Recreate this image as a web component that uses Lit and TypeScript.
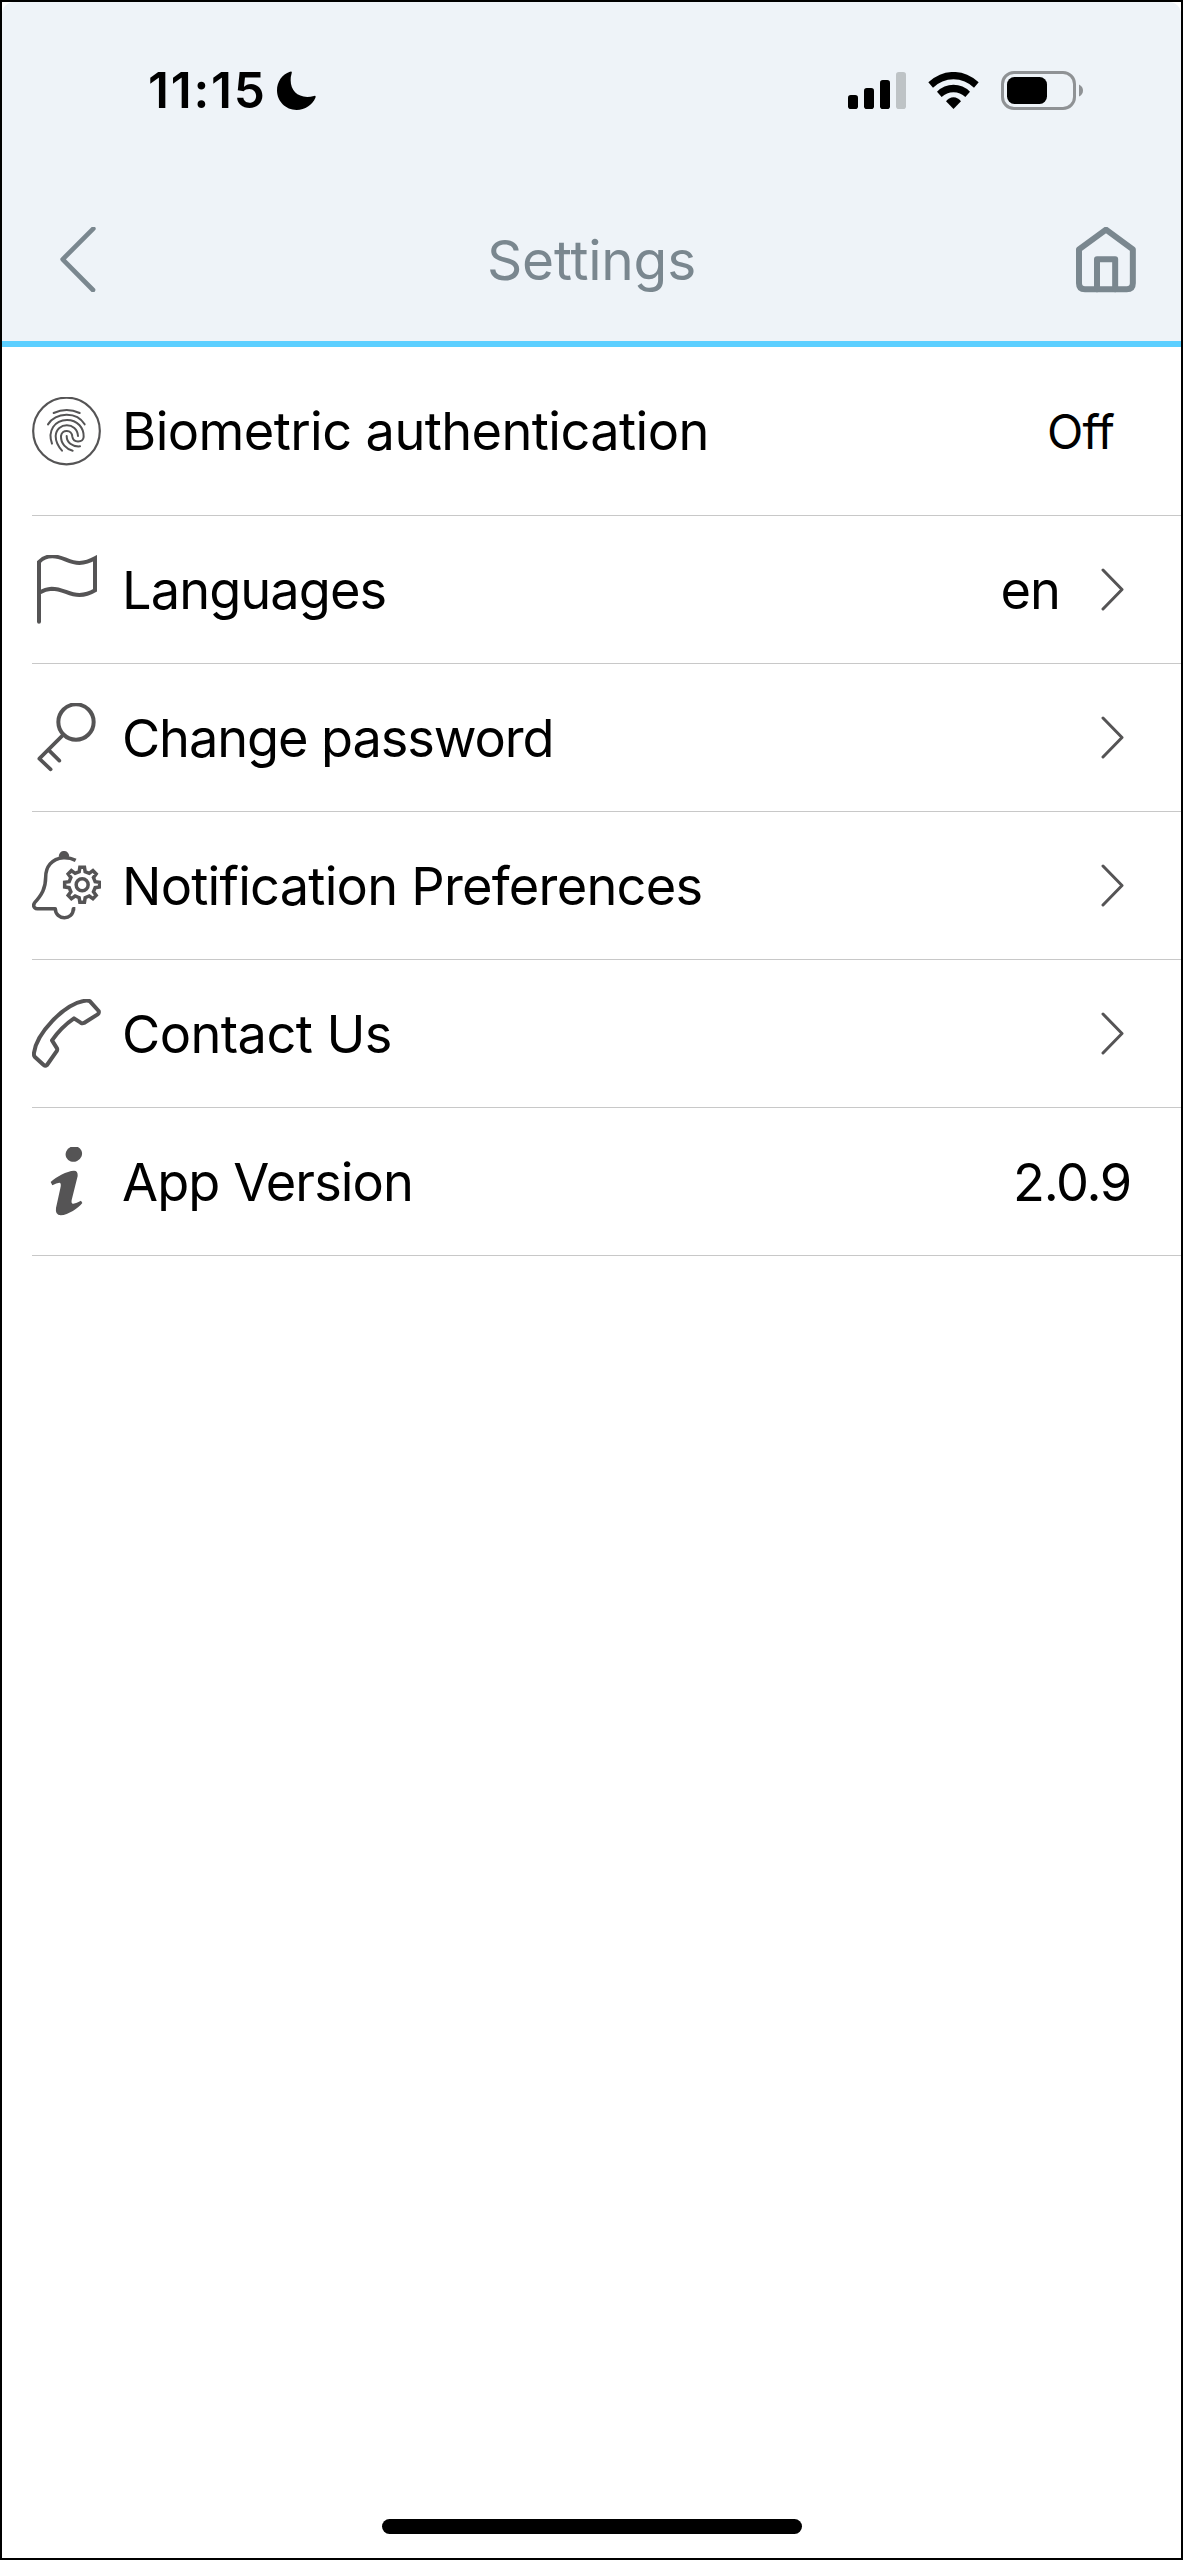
import { LitElement, html, svg, css, nothing } from "lit";
import type { SVGTemplateResult } from "lit";
import { customElement } from "lit/decorators.js";

/** Closed outline of a gear with straight-sided teeth. */
function gearPath(cx: number, cy: number, outer: number, inner: number, teeth: number): string {
  const points: string[] = [];
  const step = 360 / teeth;
  const put = (r: number, deg: number) => {
    const a = ((deg - 90) * Math.PI) / 180;
    points.push(`${(cx + r * Math.cos(a)).toFixed(1)},${(cy + r * Math.sin(a)).toFixed(1)}`);
  };
  for (let i = 0; i < teeth; i++) {
    const mid = i * step;
    put(inner, mid - 13);
    put(outer, mid - 7.5);
    put(outer, mid + 7.5);
    put(inner, mid + 13);
  }
  return `M${points.join("L")}Z`;
}

interface Row {
  label: string;
  cls: string;
  viewBox: string;
  icon: SVGTemplateResult;
  value?: string;
  link?: boolean;
}

const rows: Row[] = [
  {
    label: "Biometric authentication",
    cls: "biometric",
    value: "Off",
    viewBox: "96 78 207 207",
    icon: svg`
      <circle cx="199.500" cy="180" r="100" stroke-width="6.500"/>
      <g stroke-width="6">
        <path d="M161,126 Q200,108 239,126"/>
        <path d="M144,160 C168,123 230,120 254,160"/>
        <path d="M156,218 C142,180 164,147 201,147 C232,147 252,170 251,198 C249,215 220,217 217,197 C216,175 186,174 183,195 C182,218 199,234 218,239"/>
        <path d="M186,239 C171,222 167,210 167,195 C169,152 232,152 234,195"/>
        <path d="M200,195 C200,214 216,228 240,226"/>
      </g>`,
  },
  {
    label: "Languages",
    cls: "languages",
    value: "en",
    link: true,
    viewBox: "96 75 207 207",
    icon: svg`<path stroke-width="12" stroke-linejoin="miter" d="M117,275 V96 Q132,79 157,79 C190,79 205,99 238,99 Q262,98 285,85 V181 Q262,195 238,195 C205,195 190,176 155,176 Q135,177 120,187"/>`,
  },
  {
    label: "Change password",
    cls: "password",
    link: true,
    viewBox: "96 519 207 207",
    icon: svg`
      <circle cx="228" cy="576" r="53" stroke-width="12"/>
      <path stroke-width="11" d="M188,616 L118,686 L152,718 M147,661 L178,692"/>`,
  },
  {
    label: "Notification Preferences",
    cls: "notifications",
    link: true,
    viewBox: "96 63 207 207",
    icon: svg`
      <path class="solid" d="M176,80 C177,57 207,57 208,80 Q192,84 176,80Z"/>
      <path stroke-width="10.500" stroke-linecap="butt" d="M227,91 Q210,82 190,83 C155,86 137,110 137,142 C137,175 125,195 104,218 Q98,227 104,233 Q107,236 112,236 H166 C166,271 220,273 220,236 H226"/>
      <path stroke-width="10.500" stroke-linejoin="miter" d=${gearPath(246.5, 164, 53, 40, 8)}/>
      <circle cx="246.500" cy="164" r="18" stroke-width="10.500"/>`,
  },
  {
    label: "Contact Us",
    cls: "contact",
    link: true,
    viewBox: "96 507 207 207",
    icon: svg`<path stroke-width="12" d="M270,514 L296,543 Q298,549 293,553 L252,579 Q247,581 242,578 L222,565 C200,580 172,608 156,631 L171,655 Q173,660 169,665 L141,705 Q136,709 131,705 L104,680 Q101,676 102,668 C110,610 190,525 250,513 Q263,510 270,514 Z"/>`,
  },
  {
    label: "App Version",
    cls: "version",
    value: "2.0.9",
    viewBox: "96 81 207 207",
    icon: svg`
      <ellipse class="solid" cx="221.500" cy="102" rx="25" ry="23" transform="rotate(-25 221.500 102)"/>
      <path class="solid" d="M152,186 C170,170 200,153 222,152 Q234,152 233,168 L215,240 Q213,252 220,251 Q230,249 243,242 L247,249 C235,264 205,285 182,286 Q165,286 168,264 L181,205 Q185,188 178,188 Q170,189 157,196 Z"/>`,
  },
];

@customElement("status-bar")
class StatusBar extends LitElement {
  static styles = css`
    :host {
      display: flex;
      align-items: center;
      height: 176px;
      padding: 0 98px 0 146px;
      box-sizing: border-box;
    }
    .time {
      width: 129px;
      font-size: 49.5px;
      line-height: 60px;
      font-weight: 600;
      letter-spacing: 1.8px;
      white-space: nowrap;
      color: #000;
    }
    .indicators {
      display: flex;
      align-items: center;
      gap: 22px;
      margin-left: auto;
    }
    svg {
      display: block;
    }
  `;

  render() {
    return html`
      <span class="time">11:15</span>
      <svg width="39" height="39" viewBox="831 212 117 117">
        <path d="M870,214 C846,222 831,244 831,270 C831,303 857,329 890,329 C915,329 937,314 946,293 Q949,284 942,287 C900,298 872,275 872,240 Q872,228 875,219 Q877,211 870,214Z" />
      </svg>
      <div class="indicators">
        <svg width="58" height="37" viewBox="0 0 58 37">
          <rect x="0" y="23" width="10" height="14" rx="2.800" />
          <rect x="16" y="16" width="10" height="21" rx="2.800" />
          <rect x="32" y="8" width="10" height="29" rx="2.800" />
          <rect x="48" y="0" width="10" height="37" rx="2.800" fill="#bec3c6" />
        </svg>
        <svg width="51" height="37" viewBox="435 213 153 111">
          <path d="M436,244 A107,107 0 0 1 587,244 L573,260 A88,88 0 0 0 450,260Z" />
          <path d="M462,272 A69,69 0 0 1 561,272 L547,288 A52,52 0 0 0 476,288Z" />
          <path d="M489,301 A27,27 0 0 1 534,301 L511.500,324Z" />
        </svg>
        <svg width="82" height="39" viewBox="0 0 82 39">
          <rect x="1.500" y="1.500" width="72" height="36" rx="11.500" fill="none" stroke="#8f9295" stroke-width="3" />
          <rect x="6" y="6" width="40" height="27" rx="7.500" />
          <path d="M78,13.500 Q82,15.500 82,19.500 Q82,23.500 78,25.500Z" fill="#8f9295" />
        </svg>
      </div>
    `;
  }
}

@customElement("nav-bar")
class NavBar extends LitElement {
  static styles = css`
    :host {
      display: grid;
      grid-template-columns: 1fr auto 1fr;
      align-items: center;
      height: 163px;
      padding: 0 45px 0 58px;
      box-sizing: border-box;
      color: #7a878f;
    }
    .title {
      font-size: 55px;
      line-height: 66px;
      font-weight: 400;
      margin: 0;
      letter-spacing: -0.2px;
      padding-right: 13px;
    }
    .home {
      justify-self: end;
    }
    svg {
      display: block;
      fill: none;
      stroke: currentColor;
      stroke-linecap: round;
      stroke-linejoin: round;
    }
  `;

  render() {
    return html`
      <svg width="36" height="65" viewBox="180 681 108 195" stroke-width="14">
        <path d="M280,686 L188,778 L279,870" />
      </svg>
      <h1 class="title">Settings</h1>
      <svg class="home" width="60" height="66" viewBox="879 681 180 198" stroke-width="18">
        <path d="M888,748 L969,689 L1049.500,748 V850 Q1049.500,868 1031,868 H906 Q888,868 888,850 Z" />
        <path d="M942,868 V777.500 H996.500 V868" />
      </svg>
    `;
  }
}

@customElement("app-root")
class AppRoot extends LitElement {
  static styles = css`
    :host {
      display: block;
      font-family: Inter, "Liberation Sans", sans-serif;
    }
    .screen {
      display: flex;
      flex-direction: column;
      width: 1183px;
      height: 2560px;
      box-sizing: border-box;
      border: 2px solid #000;
      background: #fff;
    }
    .header {
      background: #eef3f8;
      border-bottom: 6px solid #5ccfff;
      border-radius: 12px 12px 0 0;
    }
    .list {
      margin: 0;
      padding: 0 0 0 30px;
      list-style: none;
      flex: 1;
    }
    .row {
      display: flex;
      align-items: center;
      height: 148px;
      box-sizing: border-box;
      border-bottom: 1px solid #c8c8c8;
      padding-right: 57px;
      font-size: 52.3px;
      line-height: 64px;
      letter-spacing: -0.9px;
      color: #000;
    }
    .icon {
      display: block;
      width: 69px;
      height: 69px;
      fill: none;
      stroke: #555455;
      stroke-linecap: round;
      stroke-linejoin: round;
      flex: none;
    }
    .solid {
      fill: #555455;
      stroke: none;
    }
    .label {
      flex: 1;
      margin-left: 21px;
      white-space: nowrap;
    }
    .biometric {
      height: 169px;
      padding-right: 67px;
      letter-spacing: -0.58px;
    }
    .biometric .value {
      font-size: 47.5px;
      padding-top: 1px;
      letter-spacing: -0.9px;
    }
    .password {
      letter-spacing: -1.1px;
    }
    .notifications {
      letter-spacing: -0.75px;
    }
    .contact {
      letter-spacing: -0.55px;
    }
    .version {
      padding-right: 50px;
    }
    .version .value {
      letter-spacing: -1.3px;
    }
    .chevron {
      display: block;
      width: 23px;
      height: 43px;
      margin-left: 41px;
      fill: none;
      stroke: #555455;
      stroke-width: 3;
      stroke-linecap: round;
      stroke-linejoin: round;
    }
    .footer {
      display: flex;
      justify-content: center;
      padding-bottom: 24px;
    }
    .indicator {
      width: 420px;
      height: 15px;
      border-radius: 8px;
      background: #000;
    }
  `;

  render() {
    return html`
      <div class="screen">
        <header class="header">
          <status-bar></status-bar>
          <nav-bar></nav-bar>
        </header>
        <ul class="list">
          ${rows.map(
            (row) => html`
              <li class="row ${row.cls}">
                <svg class="icon" viewBox=${row.viewBox}>${row.icon}</svg>
                <span class="label">${row.label}</span>
                ${row.value ? html`<span class="value">${row.value}</span>` : nothing}
                ${row.link
                  ? html`<svg class="chevron" viewBox="0 0 23 43"><path d="M2,2 L21,21.500 L2,41" /></svg>`
                  : nothing}
              </li>
            `
          )}
        </ul>
        <div class="footer"><div class="indicator"></div></div>
      </div>
    `;
  }
}
